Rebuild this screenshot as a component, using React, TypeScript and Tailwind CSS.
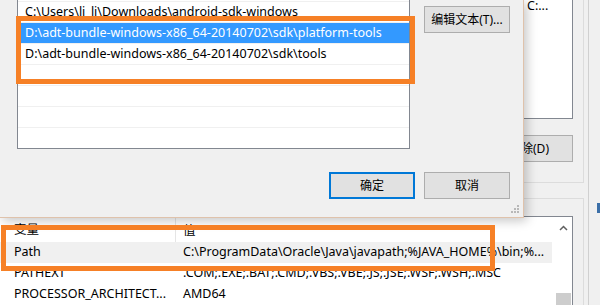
const font = "font-['Noto_Sans','Noto_Sans_CJK_SC',sans-serif]";

const pathRows = [
  "C:\\Users\\li_li\\Downloads\\android-sdk-windows",
  "D:\\adt-bundle-windows-x86_64-20140702\\sdk\\platform-tools",
  "D:\\adt-bundle-windows-x86_64-20140702\\sdk\\tools",
  "",
  "",
  "",
  "",
];

const sysVars = [
  {
    name: "Path",
    value: "C:\\ProgramData\\Oracle\\Java\\javapath;%JAVA_HOME%\\bin;%...",
    selected: true,
  },
  { name: "PATHEXT", value: ".COM;.EXE;.BAT;.CMD;.VBS;.VBE;.JS;.JSE;.WSF;.WSH;.MSC" },
  { name: "PROCESSOR_ARCHITECT...", value: "AMD64" },
];

const WinButton = ({
  children,
  primary,
  className = "",
}: {
  children: React.ReactNode;
  primary?: boolean;
  className?: string;
}) => (
  <button
    className={`flex h-[27px] w-[86px] items-center justify-center bg-[#e1e1e1] text-[12px] text-black ${
      primary ? "border-2 border-[#0078d7]" : "border border-[#adadad]"
    } ${className}`}
  >
    {children}
  </button>
);

const EnvironmentWindow = () => (
  <div className="flex h-full">
    <div className="flex w-[584px] flex-col">
      {/* user variables group */}
      <div className="h-[184px] border-r border-b border-[#dcdcdc] pr-[10px]">
        <div className="h-[119px] border-r border-b border-[#828790] bg-white pl-[527px] text-[12.5px] leading-[12px]">
          C:...
        </div>
        <div className="mt-[16px] flex justify-end">
          <WinButton className="w-[88px]">删除(D)</WinButton>
        </div>
      </div>

      {/* system variables group */}
      <div className="mt-[15px] flex-1 border-t border-r border-[#dcdcdc] pt-[17px] pr-[10px]">
        <div className="flex h-full border-t border-r border-[#828790] bg-white">
          <div className="flex-1 text-[12.5px] text-black">
            <div className="flex h-[25px] items-center">
              <div className="h-full w-[176px] border-r border-[#e5e5e5] pt-[4px] pl-[14px]">变量</div>
              <div className="pt-[4px] pl-[7px]">值</div>
            </div>
            {sysVars.map((row) => (
              <div
                key={row.name}
                className={`flex h-[21px] w-[552px] items-center ${row.selected ? "bg-[#f0f0f0]" : ""}`}
              >
                <div className="w-[176px] truncate pl-[14px]">{row.name}</div>
                <div className="pl-[7px] whitespace-nowrap">{row.value}</div>
              </div>
            ))}
          </div>
          <div className="flex w-[17px] flex-col items-center">
            <svg width="9" height="6" viewBox="0 0 9 6" className="mt-[8px]">
              <path d="M1 5 L4.5 1.5 L8 5" fill="none" stroke="#606060" strokeWidth="1.5" />
            </svg>
            <div className="mt-auto h-[12px] w-[15px] bg-[#cdcdcd]" />
          </div>
        </div>
      </div>
    </div>

    <div className="ml-[4px] w-[12px] border-l border-[#d0d0d0] pt-[203px]">
      <div className="ml-[8px] h-[10px] w-[3px] bg-[#3b6fa8]" />
    </div>
  </div>
);

const EditPathDialog = () => (
  <div
    className={`absolute top-0 left-0 flex h-[218px] w-[524px] flex-col border-r border-b border-[#dfc2ab] bg-[#f0f0f0] shadow-[3px_3px_10px_rgba(0,0,0,0.22)] ${font}`}
  >
    <div className="flex pl-[17px]">
      <div className="h-[149px] w-[393px] overflow-hidden border-r border-b border-l border-[#828790] bg-white text-[12.5px]">
        <div className="h-[2px] border-b border-[#f0f0f0]" />
        {pathRows.map((path, i) => (
          <div
            key={i}
            className={`h-[21px] border-b border-[#f0f0f0] pl-[7px] leading-[20px] whitespace-nowrap ${
              i === 1 ? "bg-[#3399ff] text-white" : "text-black"
            }`}
          >
            {path}
          </div>
        ))}
      </div>
      <div className="ml-[14px] pt-[6px]">
        <WinButton>编辑文本(T)...</WinButton>
      </div>
    </div>

    <div className="mt-[23px] flex justify-end gap-[9px] pr-[13px]">
      <WinButton primary>确定</WinButton>
      <WinButton>取消</WinButton>
    </div>

    {/* resize grip */}
    <svg width="8" height="8" viewBox="0 0 8 8" className="absolute right-[4px] bottom-[4px]">
      <rect x="6" y="0" width="2" height="2" fill="#b8b8b8" />
      <rect x="3" y="3" width="2" height="2" fill="#b8b8b8" />
      <rect x="6" y="3" width="2" height="2" fill="#b8b8b8" />
      <rect x="0" y="6" width="2" height="2" fill="#b8b8b8" />
      <rect x="3" y="6" width="2" height="2" fill="#b8b8b8" />
      <rect x="6" y="6" width="2" height="2" fill="#b8b8b8" />
    </svg>
  </div>
);

export default function App() {
  return (
    <div className={`relative h-[305px] w-[600px] overflow-hidden bg-[#f0f0f0] text-black ${font}`}>
      <EnvironmentWindow />
      <EditPathDialog />

      {/* annotation boxes */}
      <div className="absolute top-[16px] left-[16px] h-[68px] w-[399px] border-[5px] border-[#f68026]" />
      <div className="absolute top-[225px] left-[1px] h-[46px] w-[494px] border-[5px] border-[#f68026]" />
    </div>
  );
}
